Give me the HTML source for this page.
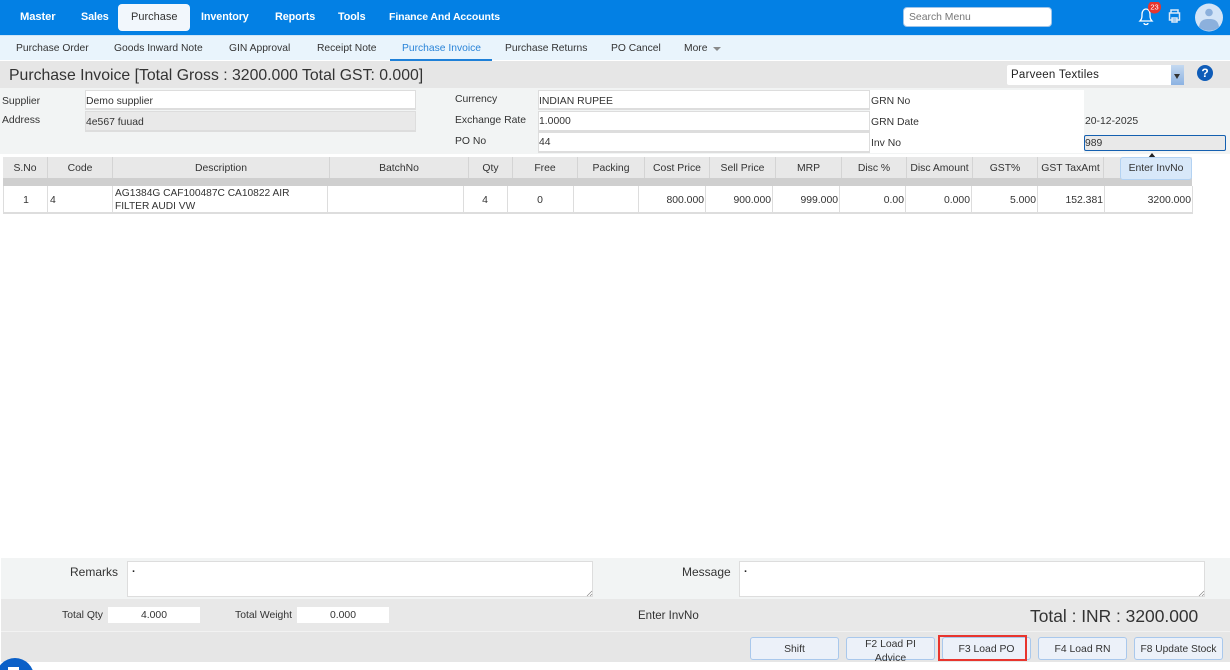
<!DOCTYPE html>
<html><head><meta charset="utf-8"><style>
html,body{margin:0;padding:0;background:#fff;width:1230px;height:670px;overflow:hidden}
body{position:relative;font-family:"Liberation Sans",sans-serif;color:#222;font-size:10.5px}
.a{position:absolute;white-space:nowrap;box-sizing:border-box}
.n{font-weight:bold;color:#fff;font-size:10.8px;top:11px;letter-spacing:-.1px}
.s{font-size:10.3px;top:43px;color:#333}
.l{font-size:10.4px;color:#333}
.i{background:#fff;border:1px solid #ddd;border-bottom:2px solid #ddd;font-size:10.4px;padding:5px 0 0 0;color:#333}
.h{top:157px;height:21px;background:#e8e8e8;border-right:1px solid #d4d4d4;text-align:center;line-height:23px;font-size:10.4px;color:#333}
.c{top:186px;height:28px;background:#fff;border-right:1px solid #ddd;border-bottom:2px solid #ddd;line-height:29px;font-size:10.4px;color:#333;text-align:right;padding-right:1px}
.b{top:637px;height:23px;background:#ecf1f9;border:1px solid #a9c8ec;border-radius:3px;text-align:center;line-height:23px;font-size:10.4px;color:#333}
</style></head><body>
<div class="a" style="left:0;top:0;width:1230px;height:35px;background:#0380e4"></div>
<div class="a" style="left:118px;top:4px;width:72px;height:27px;background:#f2f7fc;border-radius:4px"></div>
<div class="a n" style="left:20px;font-size:11.200px">Master</div>
<div class="a n" style="left:81px">Sales</div>
<div class="a" style="left:131px;top:11px;font-size:11px;color:#333">Purchase</div>
<div class="a n" style="left:201px">Inventory</div>
<div class="a n" style="left:275px">Reports</div>
<div class="a n" style="left:338px">Tools</div>
<div class="a n" style="left:389px;font-size:10.500px">Finance And Accounts</div>
<div class="a" style="left:903px;top:7px;width:149px;height:20px;background:#fff;border:1px solid #9fc4e8;border-radius:4px;font-size:10.4px;color:#777;padding:3px 0 0 5px;line-height:13px">Search Menu</div>
<svg class="a" style="left:1135px;top:2px" width="95" height="34" viewBox="0 0 95 34">
<path d="M5 19c2-2 2-4 2-7 0-3 2-5 4-5s4 2 4 5c0 3 0 5 2 7z M9 21c0 2 4 2 4 0" fill="none" stroke="#fff" stroke-width="1.3"/>
<circle cx="19.500" cy="5" r="6.500" fill="#e8352e"/>
<text x="19.500" y="7.500" font-size="7.500" fill="#fff" text-anchor="middle" font-family="Liberation Sans">23</text>
<path d="M36 11v-3h7v3M34.500 11h10v7h-10zM37 16h5v4h-5z" fill="none" stroke="#dce9f7" stroke-width="1.500"/>
<circle cx="74" cy="15.500" r="14" fill="#d3e4f7"/>
<circle cx="74" cy="10.500" r="3.800" fill="#8cb0dc"/>
<path d="M64 25c1-7 5-8 10-8s9 1 10 8c-5 5-15 5-20 0z" fill="#8cb0dc"/>
</svg>
<div class="a" style="left:0;top:35px;width:1230px;height:25px;background:#e9f4fc;border-top:1px solid #cfe5f7"></div>
<div class="a s" style="left:16px">Purchase Order</div>
<div class="a s" style="left:114px">Goods Inward Note</div>
<div class="a s" style="left:229px">GIN Approval</div>
<div class="a s" style="left:317px">Receipt Note</div>
<div class="a s" style="left:402px;color:#2a84d8">Purchase Invoice</div>
<div class="a s" style="left:505px">Purchase Returns</div>
<div class="a s" style="left:611px">PO Cancel</div>
<div class="a s" style="left:684px">More</div>
<div class="a" style="left:713px;top:47px;border:4px solid transparent;border-top:4px solid #8a8a8a"></div>
<div class="a" style="left:390px;top:59px;width:102px;height:2px;background:#1e80d8"></div>

<div class="a" style="left:0;top:61px;width:1230px;height:27px;background:#e6e6e6"></div>
<div class="a" style="left:9px;top:67px;font-size:15.8px;color:#333">Purchase Invoice [Total Gross : 3200.000 Total GST: 0.000]</div>
<div class="a" style="left:1007px;top:65px;width:177px;height:20px;background:#fff;border-radius:2px;font-size:11.500px;padding:4px 0 0 4px;color:#222;letter-spacing:.25px">Parveen Textiles</div>
<div class="a" style="left:1171px;top:65px;width:13px;height:20px;background:linear-gradient(#c4d9f0,#8cb2e2)"></div>
<div class="a" style="left:1174px;top:74px;border:3.500px solid transparent;border-top:5px solid #333"></div>
<div class="a" style="left:1197px;top:65px;width:16px;height:16px;border-radius:50%;background:#0f5cb8;color:#fff;font-weight:bold;font-size:12px;text-align:center;line-height:16px">?</div>

<div class="a" style="left:0;top:88px;width:1230px;height:66px;background:#f2f4f4"></div>
<div class="a l" style="left:2px;top:96px">Supplier</div>
<div class="a l" style="left:2px;top:115px">Address</div>
<div class="a i" style="left:85px;top:90px;width:331px;height:20px">Demo supplier</div>
<div class="a i" style="left:85px;top:111px;width:331px;height:21px;background:#e9e9e9">4e567 fuuad</div>
<div class="a l" style="left:455px;top:94px">Currency</div>
<div class="a l" style="left:455px;top:115px">Exchange Rate</div>
<div class="a l" style="left:455px;top:136px">PO No</div>
<div class="a i" style="left:538px;top:90px;width:332px;height:20px">INDIAN RUPEE</div>
<div class="a i" style="left:538px;top:111px;width:332px;height:21px;padding-top:4px">1.0000</div>
<div class="a i" style="left:538px;top:132px;width:332px;height:21px;padding-top:4px">44</div>
<div class="a" style="left:870px;top:90px;width:214px;height:63px;background:#fff"></div>
<div class="a l" style="left:871px;top:96px">GRN No</div>
<div class="a l" style="left:871px;top:117px">GRN Date</div>
<div class="a l" style="left:871px;top:138px">Inv No</div>
<div class="a l" style="left:1085px;top:116px">20-12-2025</div>
<div class="a" style="left:1084px;top:135px;width:142px;height:16px;background:#e9e9e9;border:1px solid #1560b0;border-radius:2px;font-size:10.4px;line-height:15px;color:#333">989</div>

<div class="a h" style="left:3px;width:45px">S.No</div>
<div class="a h" style="left:48px;width:65px">Code</div>
<div class="a h" style="left:113px;width:217px">Description</div>
<div class="a h" style="left:330px;width:139px">BatchNo</div>
<div class="a h" style="left:469px;width:44px">Qty</div>
<div class="a h" style="left:513px;width:65px">Free</div>
<div class="a h" style="left:578px;width:67px">Packing</div>
<div class="a h" style="left:645px;width:65px">Cost Price</div>
<div class="a h" style="left:710px;width:66px">Sell Price</div>
<div class="a h" style="left:776px;width:66px">MRP</div>
<div class="a h" style="left:842px;width:65px">Disc %</div>
<div class="a h" style="left:907px;width:66px">Disc Amount</div>
<div class="a h" style="left:973px;width:65px">GST%</div>
<div class="a h" style="left:1038px;width:66px">GST TaxAmt</div>
<div class="a h" style="left:1104px;width:88px;border-right:0"></div>
<div class="a" style="left:3px;top:178px;width:1189px;height:8px;background:#cfcfcf"></div>

<div class="a c" style="left:3px;width:45px;text-align:center;padding-left:2px;border-left:1px solid #ddd">1</div>
<div class="a c" style="left:48px;width:65px;text-align:left;padding-left:2px">4</div>
<div class="a c" style="left:113px;width:215px;text-align:left;padding-left:2px;line-height:13px;padding-top:1px;white-space:normal;font-size:10.2px">AG1384G CAF100487C CA10822 AIR FILTER AUDI VW</div>
<div class="a c" style="left:328px;width:136px"></div>
<div class="a c" style="left:464px;width:44px;text-align:center">4</div>
<div class="a c" style="left:508px;width:66px;text-align:center">0</div>
<div class="a c" style="left:574px;width:65px"></div>
<div class="a c" style="left:639px;width:67px">800.000</div>
<div class="a c" style="left:706px;width:67px">900.000</div>
<div class="a c" style="left:773px;width:67px">999.000</div>
<div class="a c" style="left:840px;width:66px">0.00</div>
<div class="a c" style="left:906px;width:66px">0.000</div>
<div class="a c" style="left:972px;width:66px">5.000</div>
<div class="a c" style="left:1038px;width:67px">152.381</div>
<div class="a c" style="left:1105px;width:88px">3200.000</div>

<div class="a" style="left:1148px;top:153px;border:4px solid transparent;border-top:0;border-bottom:5px solid #222"></div>
<div class="a" style="left:1120px;top:157px;width:72px;height:23px;background:#d8e8f9;border:1px solid #b3d2f2;border-radius:3px;text-align:center;line-height:22px;font-size:10.4px;color:#333">Enter InvNo</div>

<div class="a" style="left:1px;top:558px;width:1229px;height:41px;background:#f2f4f4"></div>
<div class="a" style="left:70px;top:565px;font-size:12px;color:#333">Remarks</div>
<div class="a" style="left:127px;top:561px;width:466px;height:36px;background:#fff;border:1px solid #ddd;font-size:11px;font-weight:bold;padding:1px 0 0 4px">.</div>
<div class="a" style="left:682px;top:565px;font-size:12px;color:#333">Message</div>
<div class="a" style="left:739px;top:561px;width:466px;height:36px;background:#fff;border:1px solid #ddd;font-size:11px;font-weight:bold;padding:1px 0 0 4px">.</div>
<svg class="a" style="left:586px;top:590px" width="7" height="7"><path d="M1 6L6 1M4 6L6 4" stroke="#888" stroke-width=".7"/></svg>
<svg class="a" style="left:1198px;top:590px" width="7" height="7"><path d="M1 6L6 1M4 6L6 4" stroke="#888" stroke-width=".7"/></svg>

<div class="a" style="left:1px;top:599px;width:1229px;height:33px;background:#e8e8e8;border-bottom:1px solid #f2f2f2"></div>
<div class="a" style="left:1px;top:632px;width:1229px;height:30px;background:#e6e6e6"></div>
<div class="a l" style="left:62px;top:610px">Total Qty</div>
<div class="a" style="left:108px;top:607px;width:92px;height:16px;background:#fff;text-align:center;font-size:10.4px;line-height:17px;color:#333">4.000</div>
<div class="a l" style="left:235px;top:610px">Total Weight</div>
<div class="a" style="left:297px;top:607px;width:92px;height:16px;background:#fff;text-align:center;font-size:10.4px;line-height:17px;color:#333">0.000</div>
<div class="a" style="left:638px;top:610px;font-size:11.500px;color:#333">Enter InvNo</div>
<div class="a" style="left:1030px;top:606px;font-size:17.400px;color:#333">Total : INR : 3200.000</div>

<div class="a b" style="left:750px;width:89px">Shift</div>
<div class="a b" style="left:846px;width:89px;line-height:14px;white-space:normal;padding:0 14px;height:23px">F2 Load PI Advice</div>
<div class="a b" style="left:942px;width:89px">F3 Load PO</div>
<div class="a" style="left:938px;top:635px;width:89px;height:26px;border:2px solid #e8352e"></div>
<div class="a b" style="left:1038px;width:89px">F4 Load RN</div>
<div class="a b" style="left:1134px;width:89px;font-size:10.200px">F8 Update Stock</div>

<div class="a" style="left:-4px;top:658px;width:38px;height:38px;border-radius:50%;background:#0a60c8"></div>
<div class="a" style="left:8px;top:667px;width:11px;height:3px;background:#fff"></div>
</body></html>
